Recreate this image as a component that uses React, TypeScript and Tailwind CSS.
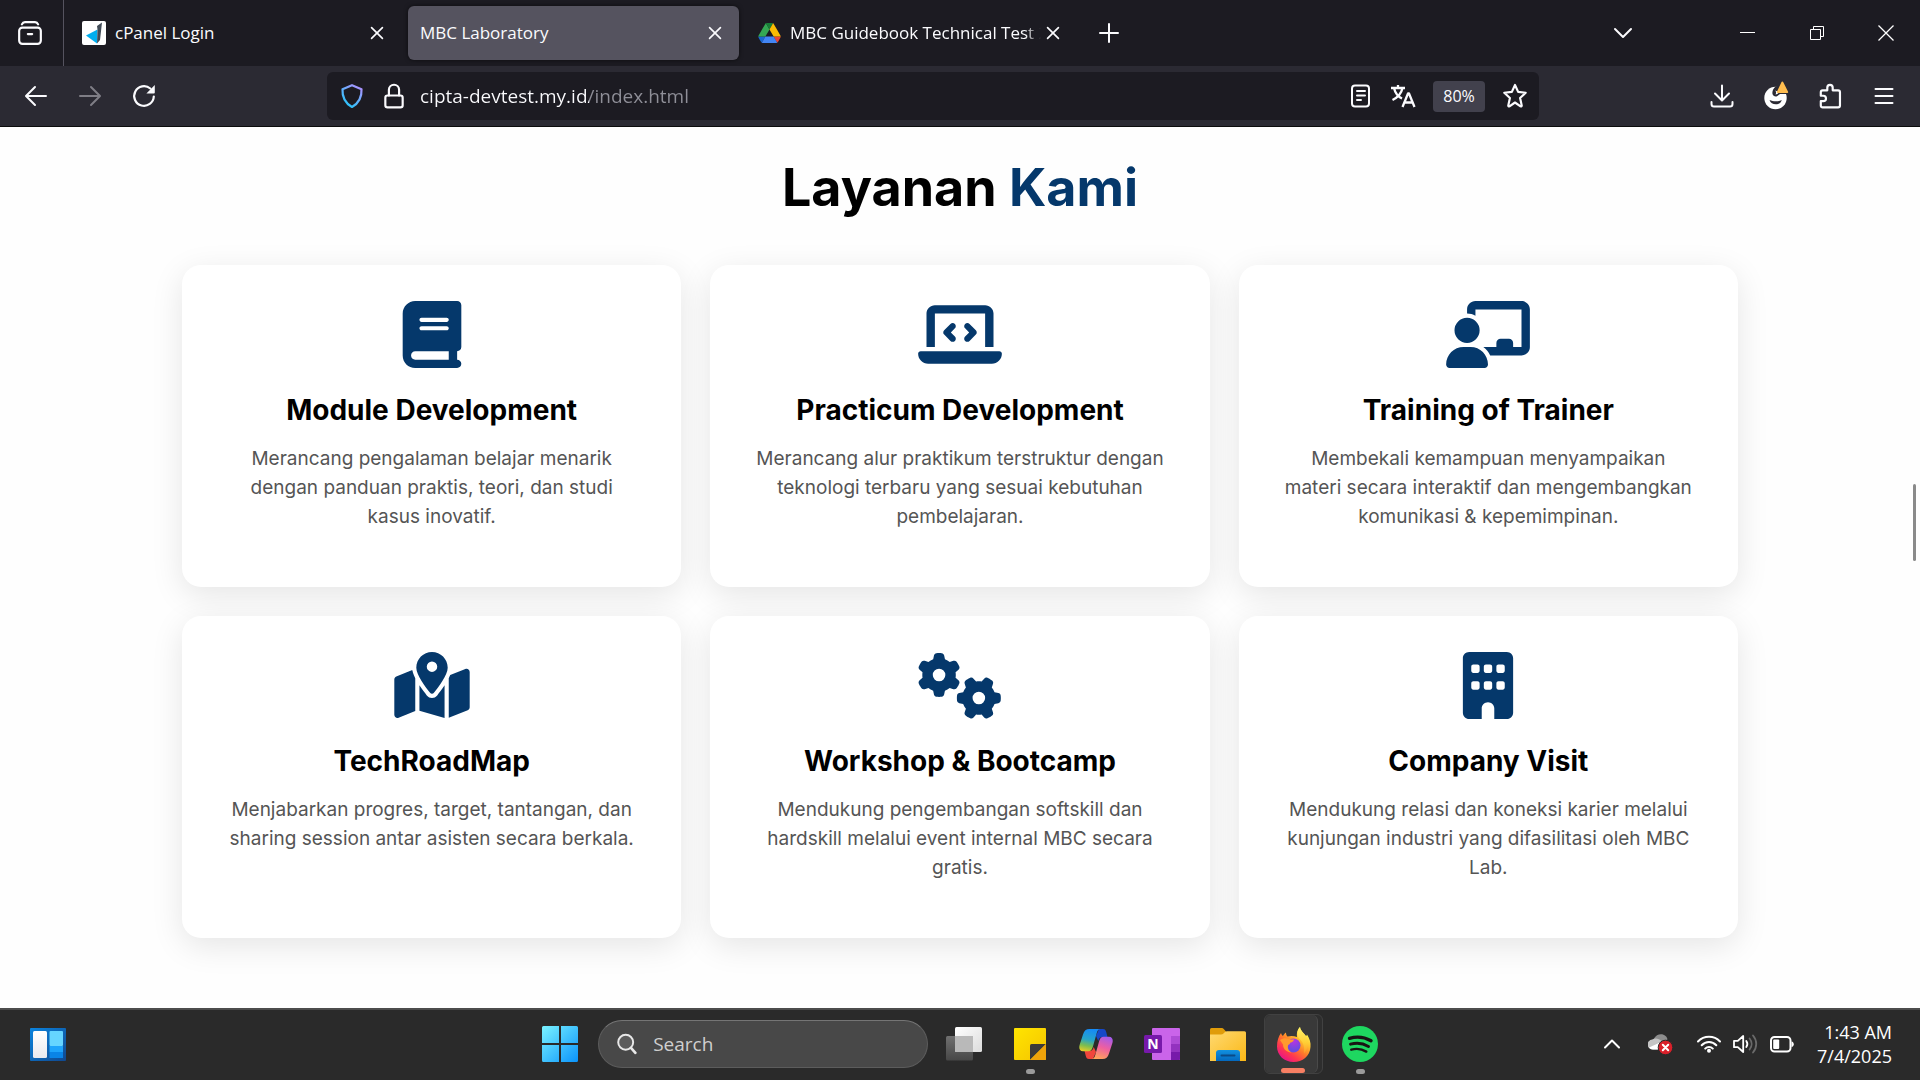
import type { ReactNode } from "react";
import type { IconType } from "react-icons";
import {
  FaBook,
  FaBuilding,
  FaChalkboardUser,
  FaGears,
  FaLaptopCode,
  FaMapLocationDot,
} from "react-icons/fa6";

type Service = { icon: IconType; title: string; text: string };

const services: Service[] = [
  {
    icon: FaBook,
    title: "Module Development",
    text: "Merancang pengalaman belajar menarik dengan panduan praktis, teori, dan studi kasus inovatif.",
  },
  {
    icon: FaLaptopCode,
    title: "Practicum Development",
    text: "Merancang alur praktikum terstruktur dengan teknologi terbaru yang sesuai kebutuhan pembelajaran.",
  },
  {
    icon: FaChalkboardUser,
    title: "Training of Trainer",
    text: "Membekali kemampuan menyampaikan materi secara interaktif dan mengembangkan komunikasi & kepemimpinan.",
  },
  {
    icon: FaMapLocationDot,
    title: "TechRoadMap",
    text: "Menjabarkan progres, target, tantangan, dan sharing session antar asisten secara berkala.",
  },
  {
    icon: FaGears,
    title: "Workshop & Bootcamp",
    text: "Mendukung pengembangan softskill dan hardskill melalui event internal MBC secara gratis.",
  },
  {
    icon: FaBuilding,
    title: "Company Visit",
    text: "Mendukung relasi dan koneksi karier melalui kunjungan industri yang difasilitasi oleh MBC Lab.",
  },
];

function Line({ size = 24, width = 2, children }: { size?: number; width?: number; children: ReactNode }) {
  return (
    <svg
      width={size}
      height={size}
      viewBox="0 0 24 24"
      fill="none"
      stroke="currentColor"
      strokeWidth={width}
      strokeLinecap="round"
      strokeLinejoin="round"
      aria-hidden="true"
    >
      {children}
    </svg>
  );
}

/* ---------- Browser tabs ---------- */

function CpanelIcon() {
  return (
    <svg width="24" height="24" viewBox="0 0 24 24" aria-hidden="true" className="shrink-0">
      <rect width="24" height="24" rx="2" fill="#fff" />
      <path d="M4 14.500L15.500 8.500L15 22.500Z" fill="#00aeef" />
      <path d="M15 5L20 1.500L18 19L15 22.500L15.500 8.500Z" fill="#414b57" />
    </svg>
  );
}

function DriveIcon() {
  return (
    <svg width="23" height="20" viewBox="0 0 87.3 78" aria-hidden="true" className="shrink-0">
      <path d="m6.600 66.850 3.850 6.650c.8 1.400 1.950 2.500 3.300 3.300l13.750-23.800h-27.500c0 1.550.4 3.100 1.200 4.500z" fill="#1967d2" />
      <path d="m43.650 25-13.750-23.800c-1.350.8-2.500 1.900-3.300 3.300l-25.400 44a9.060 9.060 0 0 0 -1.200 4.500h27.500z" fill="#34a853" />
      <path d="m73.550 76.800c1.350-.8 2.500-1.900 3.300-3.300l1.600-2.750 7.650-13.250c.8-1.400 1.200-2.950 1.200-4.500h-27.500l5.850 11.500z" fill="#ea4335" />
      <path d="m43.650 25 13.750-23.800c-1.350-.8-2.900-1.200-4.500-1.200h-18.500c-1.600 0-3.150.45-4.500 1.200z" fill="#188038" />
      <path d="m59.800 53h-32.300l-13.750 23.800c1.350.8 2.900 1.200 4.500 1.200h50.800c1.600 0 3.150-.45 4.500-1.200z" fill="#4285f4" />
      <path d="m73.400 26.500-12.700-22c-.8-1.400-1.950-2.500-3.300-3.300l-13.750 23.800 16.150 28h27.450c0-1.550-.4-3.100-1.200-4.500z" fill="#fbbc04" />
    </svg>
  );
}

function Tab({ title, icon, active = false, fade = false }: { title: string; icon?: ReactNode; active?: boolean; fade?: boolean }) {
  return (
    <div
      className={
        "flex h-[54px] w-[331px] items-center rounded-md px-3 " +
        (active ? "bg-[#55535f] shadow-[0_0_4px_rgba(0,0,0,0.6)]" : "")
      }
    >
      <button type="button" role="tab" aria-selected={active} className="flex min-w-0 flex-1 items-center gap-[9px] text-left">
        {icon}
        <span
          className={
            "min-w-0 flex-1 overflow-hidden whitespace-nowrap text-[17px] leading-6 " +
            (fade ? "[mask-image:linear-gradient(to_left,transparent,black_16px)]" : "")
          }
        >
          {title}
        </span>
      </button>
      <button type="button" aria-label={"Close " + title} className="-ml-1 flex h-6 w-7 shrink-0 items-center justify-end pr-[2px]">
        <Line size={20}>
          <path d="M5.500 5.500l13 13M18.500 5.500l-13 13" />
        </Line>
      </button>
    </div>
  );
}

function TabStrip() {
  return (
    <div className="flex h-[66px] items-center bg-[#1c1b22]">
      <button type="button" aria-label="Firefox View" className="flex h-full w-16 items-center justify-center border-r border-[#55535f] pr-1">
        <Line size={26} width={2}>
          <rect x="2" y="7" width="20" height="15" rx="3" />
          <path d="M4.500 4c.6-1.300 1.500-2 2.800-2h9.400c1.300 0 2.200.7 2.800 2M10 13h4" />
        </Line>
      </button>
      <div role="tablist" className="ml-[6px] flex items-center gap-[7px]">
        <Tab title="cPanel Login" icon={<CpanelIcon />} />
        <Tab title="MBC Laboratory" active />
        <Tab title="MBC Guidebook Technical Test 2025" icon={<DriveIcon />} fade />
      </div>
      <button type="button" aria-label="New tab" className="ml-2 flex size-12 items-center justify-center">
        <Line width={2}>
          <path d="M12 3v18M3 12h18" />
        </Line>
      </button>
      <button type="button" aria-label="List all tabs" className="mr-[66px] ml-auto flex size-12 items-center justify-center">
        <Line width={2}>
          <path d="M4 8l8 8 8-8" />
        </Line>
      </button>
      <button type="button" aria-label="Minimize" className="flex h-full w-[69px] items-center justify-center">
        <svg width="16" height="16" stroke="#fff" aria-hidden="true">
          <path d="M0 7.500h15" />
        </svg>
      </button>
      <button type="button" aria-label="Restore" className="flex h-full w-[69px] items-center justify-center">
        <svg width="16" height="16" stroke="#fff" fill="none" aria-hidden="true">
          <path d="M1.500 4.500h10v10h-10zM4.500 4.500v-3h10v10h-3" />
        </svg>
      </button>
      <button type="button" aria-label="Close window" className="flex h-full w-[69px] items-center justify-center">
        <svg width="16" height="16" stroke="#fff" aria-hidden="true">
          <path d="M.5.5l15 15M15.500.5l-15 15" strokeWidth="1.300" />
        </svg>
      </button>
    </div>
  );
}

/* ---------- Browser toolbar ---------- */

function ToolButton({ label, children, dim = false }: { label: string; children: ReactNode; dim?: boolean }) {
  return (
    <button type="button" aria-label={label} disabled={dim} className={"flex h-12 w-[54px] items-center justify-center " + (dim ? "text-[#7f7e86]" : "")}>
      {children}
    </button>
  );
}

function FieldButton({ label, children }: { label: string; children: ReactNode }) {
  return (
    <button type="button" aria-label={label} className="flex h-12 w-[42px] shrink-0 items-center justify-center">
      {children}
    </button>
  );
}

function AddressBar() {
  return (
    <div className="mx-[156px] flex h-12 min-w-0 flex-1 items-center rounded-md bg-[#1c1b22] pr-[3px] pl-1">
      <FieldButton label="Tracking protection">
        <svg width="24" height="26" viewBox="0 0 24 26" fill="none" aria-hidden="true">
          <defs>
            <linearGradient id="shield" x1="4" y1="24" x2="20" y2="3" gradientUnits="userSpaceOnUse">
              <stop stopColor="#1cc8f8" />
              <stop offset=".5" stopColor="#5fb0fc" />
              <stop offset="1" stopColor="#b190ff" />
            </linearGradient>
          </defs>
          <path d="M12 2.200L21.500 6.200c.5 8.500-3 14-9.500 17.800C5.500 20.200 2 14.700 2.500 6.200Z" stroke="url(#shield)" strokeWidth="2.200" strokeLinejoin="round" />
        </svg>
      </FieldButton>
      <FieldButton label="Site information">
        <Line size={26}>
          <rect x="4" y="11.500" width="16" height="11" rx="2" />
          <path d="M7.300 11.500V6.300a4.700 4.700 0 0 1 9.400 0v5.200" />
        </Line>
      </FieldButton>
      <input
        type="text"
        aria-label="Address"
        defaultValue="cipta-devtest.my.id/index.html"
        className="min-w-0 flex-1 bg-[linear-gradient(to_right,#fbfbfe_174px,#8f8f98_174px)] bg-clip-text pl-[5px] text-[19px] leading-8 text-transparent outline-none"
      />
      <FieldButton label="Reader view">
        <Line size={24}>
          <rect x="3" y="1.500" width="17" height="21" rx="3" />
          <path d="M8 7h8M8 11.500h8M8 16h4" />
        </Line>
      </FieldButton>
      <FieldButton label="Translate page">
        <svg width="26" height="26" viewBox="0 0 26 26" fill="none" stroke="currentColor" strokeWidth="2.300" strokeLinejoin="round" aria-hidden="true">
          <path d="M1 5h14M8 2v3M12.500 5C11.500 10 7.500 14.500 2.500 17M4 5c1 4.500 4 8.500 8 10.500" />
          <path d="M12.500 24l5.500-13.500h1L24.500 24M14.500 19.500h8" />
        </svg>
      </FieldButton>
      <button type="button" aria-label="Reset zoom level, 80%" className="mx-[9px] h-[31px] w-[52px] shrink-0 rounded bg-[#42414d] text-[16px] leading-6">
        80%
      </button>
      <FieldButton label="Bookmark this page">
        <Line size={26}>
          <path d="M12 1.800l2.900 6.400 7 .8-5.200 4.800 1.500 7c.1.700-.5 1.100-1.100.8L12 18l-5.100 3.600c-.6.300-1.200-.1-1.100-.8l1.500-7L2.100 9l7-.8Z" />
        </Line>
      </FieldButton>
    </div>
  );
}

function Toolbar() {
  return (
    <div className="flex h-[61px] items-center border-b border-[#0c0c0d] bg-[#2b2a33] px-[9px]">
      <ToolButton label="Back">
        <Line>
          <path d="M22 12H2.500M11 3l-9 9 9 9" />
        </Line>
      </ToolButton>
      <ToolButton label="Forward" dim>
        <Line>
          <path d="M2 12h19.500M13 3l9 9-9 9" />
        </Line>
      </ToolButton>
      <ToolButton label="Reload">
        <svg width="26" height="26" viewBox="0 0 26 26" fill="none" aria-hidden="true">
          <path d="M22.800 13.500a9.800 9.800 0 1 1-3.500-8" stroke="currentColor" strokeWidth="2.200" strokeLinecap="round" />
          <path d="M23.800 2v7.500a.9.900 0 0 1-.9.900h-7.500Z" fill="currentColor" />
        </svg>
      </ToolButton>
      <AddressBar />
      <ToolButton label="Downloads">
        <Line>
          <path d="M12 1.500v14.500M5 9.500l7 7 7-7M1.500 18v2c0 1.500 1 2.500 2.500 2.500h16c1.500 0 2.500-1 2.500-2.500v-2" />
        </Line>
      </ToolButton>
      <ToolButton label="Account, sign-in needed">
        <svg width="26" height="30" viewBox="0 0 26 30" aria-hidden="true">
          <circle cx="12.500" cy="17" r="11.200" fill="#fff" />
          <path d="M12.500 5.500c-2.500 2.500-3.500 5-3 7.500.5 2 2.500 3 4.500 2.300L17 13h8V4Z" fill="#2b2a33" />
          <path d="M12 9.500c1.200.5 1.500 2.500.5 4 1.500-.2 3-1.200 3.500-2.500Z" fill="#fff" />
          <path d="M6.500 19c2 .9 4 1.300 6.300 1.300s4.200-.4 6-1.300c-1 3-3 4.300-6 4.300s-5.300-1.300-6.300-4.300Z" fill="#2b2a33" />
          <path d="M18.400 1.200a1 1 0 0 1 1.900 0l4.800 9.600c.3.700 0 1.200-.7 1.200H14.600c-.7 0-1-.5-.7-1.200Z" fill="#ffbd4f" />
        </svg>
      </ToolButton>
      <ToolButton label="Extensions">
        <Line size={26} width={2}>
          <path d="M3.500 8.500c0-1 .7-1.700 1.700-1.700h4.300V4.300a2.500 2.500 0 0 1 5 0v2.500h5c1 0 1.700.7 1.700 1.700v12.300c0 1-.7 1.700-1.700 1.700H5.200c-1 0-1.700-.7-1.700-1.700v-4h2.300a2.500 2.500 0 0 0 0-5H3.500Z" />
        </Line>
      </ToolButton>
      <ToolButton label="Application menu">
        <Line size={24}>
          <path d="M3.500 5h17M3.500 12h17M3.500 19h17" />
        </Line>
      </ToolButton>
    </div>
  );
}

/* ---------- Page content ---------- */

function ServiceCard({ icon: Icon, title, text }: Service) {
  return (
    <article className="flex flex-col items-center rounded-[19px] bg-white px-[43px] pt-9 pb-14 text-center shadow-[0_8px_32px_rgba(0,0,0,0.1)]">
      <Icon className="h-[67px] w-[84px] text-[#05386b]" aria-hidden="true" />
      <h3 className="mt-[25px] text-[28px] leading-[34px] font-bold text-black">{title}</h3>
      <p className="mt-[17px] text-[19px] leading-[29px] text-[#555]">{text}</p>
    </article>
  );
}

function Page() {
  return (
    <main className="relative flex-1 bg-[#fefefe] px-12 pt-6 pb-[70px] font-[Inter,sans-serif]">
      <h2 className="text-center text-[52px] leading-[74px] font-bold text-black">
        Layanan <span className="text-[#05386b]">Kami</span>
      </h2>
      <section className="mx-auto mt-10 grid max-w-[1556px] grid-cols-3 gap-[29px]">
        {services.map((s) => (
          <ServiceCard key={s.title} {...s} />
        ))}
      </section>
      <div className="absolute top-[357px] right-1 h-[77px] w-[3px] rounded-full bg-[#8a8a8a]" />
    </main>
  );
}

/* ---------- Taskbar ---------- */

function WidgetsIcon() {
  return (
    <svg width="36" height="33" viewBox="0 0 36 33" aria-hidden="true">
      <defs>
        <linearGradient id="wg" x1="0" y1="0" x2="1" y2="1">
          <stop stopColor="#0b84de" />
          <stop offset="1" stopColor="#10488f" />
        </linearGradient>
        <linearGradient id="wp" x1="0" y1="0" x2="0" y2="1">
          <stop stopColor="#fff" />
          <stop offset="1" stopColor="#e9e9ee" />
        </linearGradient>
      </defs>
      <rect width="36" height="33" rx="1" fill="url(#wg)" />
      <rect x="3" y="3" width="14" height="27" rx="1.500" fill="url(#wp)" />
      <rect x="19.500" y="3" width="13.500" height="15" rx="1" fill="#66d5ff" />
      <rect x="19.500" y="18" width="13.500" height="6" fill="#1ea4fb" />
      <rect x="19.500" y="24" width="13.500" height="6" fill="#0a84e6" />
    </svg>
  );
}

function StartIcon() {
  return (
    <svg width="36" height="36" viewBox="0 0 36 36" aria-hidden="true">
      <defs>
        <linearGradient id="win" x1="0" y1="0" x2="36" y2="36" gradientUnits="userSpaceOnUse">
          <stop stopColor="#7af3ff" />
          <stop offset="1" stopColor="#0a93fb" />
        </linearGradient>
      </defs>
      <path d="M1.500 0H17v17H0V1.500A1.500 1.500 0 0 1 1.500 0ZM19 0h15.500A1.500 1.500 0 0 1 36 1.500V17H19ZM0 19h17v17H1.500A1.500 1.500 0 0 1 0 34.500ZM19 19h17v15.500a1.500 1.500 0 0 1-1.500 1.500H19Z" fill="url(#win)" />
    </svg>
  );
}

function TaskViewIcon() {
  return (
    <svg width="36" height="34" viewBox="0 0 36 34" aria-hidden="true">
      <defs>
        <linearGradient id="tvb" x1="0" y1="0" x2="0" y2="1">
          <stop stopColor="#707070" />
          <stop offset="1" stopColor="#474747" />
        </linearGradient>
        <linearGradient id="tvf" x1="0" y1="0" x2="1" y2="1">
          <stop stopColor="#fff" />
          <stop offset="1" stopColor="#dcdcdc" />
        </linearGradient>
      </defs>
      <rect x="0" y="9" width="27" height="24.500" rx="1.500" fill="url(#tvb)" />
      <rect x="9" y="0" width="27" height="25" rx="1.500" fill="url(#tvf)" />
      <path d="M9 9h18v16H10.500A1.500 1.500 0 0 1 9 23.500Z" fill="#b9b9b9" />
    </svg>
  );
}

function StickyNotesIcon() {
  return (
    <svg width="32" height="32" viewBox="0 0 32 32" aria-hidden="true">
      <defs>
        <linearGradient id="sn" x1="0" y1="0" x2="1" y2="1">
          <stop stopColor="#ffe500" />
          <stop offset="1" stopColor="#f5c400" />
        </linearGradient>
      </defs>
      <rect width="32" height="32" rx="1" fill="url(#sn)" />
      <path d="M16 32V17.500A1.500 1.500 0 0 1 17.500 16H32Z" fill="#3d3a38" />
      <path d="M16 32L32 16V31a1 1 0 0 1-1 1Z" fill="#efa30a" />
    </svg>
  );
}

function CopilotIcon() {
  return (
    <svg width="34" height="32" viewBox="0 0 34 32" aria-hidden="true">
      <defs>
        <linearGradient id="cp1" x1="10" y1="1" x2="5" y2="24" gradientUnits="userSpaceOnUse">
          <stop stopColor="#168bf5" />
          <stop offset=".45" stopColor="#27a5c8" />
          <stop offset=".72" stopColor="#7dbd4f" />
          <stop offset="1" stopColor="#f5d021" />
        </linearGradient>
        <linearGradient id="cp2" x1="28" y1="8" x2="20" y2="31" gradientUnits="userSpaceOnUse">
          <stop stopColor="#a05bf0" />
          <stop offset=".5" stopColor="#ee5fa0" />
          <stop offset="1" stopColor="#ffa25a" />
        </linearGradient>
      </defs>
      <path d="M20 1h4c2 0 2.700 1 3.200 3l1.300 5h-5c-2.500 0-3.500 1.500-4.200 4L17 8Z" fill="#1748c8" />
      <path d="M14 31h-4c-2 0-2.700-1-3.200-3l-1.300-5h5c2.500 0 3.500-1.500 4.200-4L17 24Z" fill="#f0463c" />
      <path d="M10.500 1H21c-2 .5-2.700 2-3.400 4.500L13.800 19c-.8 2.800-2 4.300-4.500 4.300H4c-3.500 0-4.300-3-3.400-6.300L4 6.500C5.200 2.800 7 1 10.500 1Z" fill="url(#cp1)" />
      <path d="M23.500 31H13c2-.5 2.700-2 3.400-4.500L20.200 13c.8-2.800 2-4.300 4.500-4.300H30c3.500 0 4.300 3 3.400 6.300L30 25.500C28.800 29.200 27 31 23.500 31Z" fill="url(#cp2)" />
    </svg>
  );
}

function OneNoteIcon() {
  return (
    <svg width="36" height="32" viewBox="0 0 36 32" aria-hidden="true">
      <rect x="8" width="28" height="32" rx="1" fill="#ca64ea" />
      <rect x="27" y="8" width="9" height="8" fill="#ae4bd5" />
      <rect x="27" y="16" width="9" height="8" fill="#9332bf" />
      <path d="M27 24h9v7a1 1 0 0 1-1 1h-8Z" fill="#7719aa" />
      <rect x="0" y="7" width="18" height="18" rx="1.500" fill="#7719aa" />
      <text x="9" y="21" textAnchor="middle" fontFamily="Open Sans, sans-serif" fontWeight="700" fontSize="14" fill="#fff">
        N
      </text>
    </svg>
  );
}

function ExplorerIcon() {
  return (
    <svg width="36" height="33" viewBox="0 0 36 33" aria-hidden="true">
      <defs>
        <linearGradient id="fe" x1="0" y1="0" x2="1" y2="1">
          <stop stopColor="#ffd971" />
          <stop offset="1" stopColor="#fbb816" />
        </linearGradient>
        <linearGradient id="fb" x1="0" y1="0" x2="0" y2="1">
          <stop stopColor="#1191e0" />
          <stop offset="1" stopColor="#0468bd" />
        </linearGradient>
      </defs>
      <path d="M0 1.500A1.500 1.500 0 0 1 1.500 0h10c1 0 1.500.3 2.200 1L16 3.500V8H0Z" fill="#e09c0a" />
      <path d="M0 6.500h11c1 0 1.800-.3 2.500-1L15 4c.6-.6 1.200-.8 2-.8h17.500A1.500 1.500 0 0 1 36 4.700V33H0Z" fill="url(#fe)" />
      <path d="M6 33V25a3 3 0 0 1 3-3h18a3 3 0 0 1 3 3v8Z" fill="url(#fb)" />
      <path d="M11.500 27.500h13" stroke="#0b4a86" strokeWidth="2" strokeLinecap="round" />
    </svg>
  );
}

function FirefoxIcon() {
  return (
    <svg width="35" height="35" viewBox="0 0 35 35" aria-hidden="true">
      <defs>
        <linearGradient id="ff1" x1="28" y1="4" x2="6" y2="32" gradientUnits="userSpaceOnUse">
          <stop stopColor="#fff44f" />
          <stop offset=".25" stopColor="#ffc02e" />
          <stop offset=".5" stopColor="#ff7a2a" />
          <stop offset=".75" stopColor="#ff3750" />
          <stop offset="1" stopColor="#e8128a" />
        </linearGradient>
        <linearGradient id="ff2" x1="26" y1="0" x2="26" y2="26" gradientUnits="userSpaceOnUse">
          <stop stopColor="#fff36b" />
          <stop offset=".6" stopColor="#ffcf35" />
          <stop offset="1" stopColor="#ff9a2b" />
        </linearGradient>
        <radialGradient id="ff3" cx="18" cy="14" r="9" gradientUnits="userSpaceOnUse">
          <stop stopColor="#b833e1" />
          <stop offset="1" stopColor="#6a4be0" />
        </radialGradient>
      </defs>
      <path d="M5 6c.5 1.500 1.200 2.500 2 3 .5-1.300 1.500-2.500 3-3.500 0 1.700.5 3 1.500 4 3-1 6.500-.7 9.500.5C20.500 6.500 21 3 24 0c.5 4 4 6 6 9 .5-.3.800-.8 1-1.500 2.500 4 4 8 3.500 12.500C34 29 26.500 35 17.500 35S1 28.500 1 19.500C1 14 2.500 9.500 5 6Z" fill="url(#ff1)" />
      <path d="M24 0c.5 4 4 6 6 9.500 3 5.500 2.500 12-2 17 .8-6-.5-11.500-4.500-14.500C20.500 9 21 3 24 0Z" fill="url(#ff2)" />
      <circle cx="17.500" cy="18.500" r="7" fill="url(#ff3)" />
      <path d="M4 13c3-2 6-2.200 8.500-1 1.500.7 3.500.5 5.500.2-.3 2-1.500 3-3.500 3.300-.5 1-1 2-2.300 2.500-1 3 .3 6 3.300 7.500-5-.2-8.500-3.500-8.500-8Z" fill="#ff9a2e" />
    </svg>
  );
}

function SpotifyIcon() {
  return (
    <svg width="36" height="36" viewBox="0 0 36 36" fill="none" stroke="#191414" strokeLinecap="round" aria-hidden="true">
      <circle cx="18" cy="18" r="18" fill="#1ed760" stroke="none" />
      <path d="M7.500 12.300c7-2 15-1.300 21.500 2.400" strokeWidth="3.400" />
      <path d="M8.500 18.200c6-1.700 12.500-1 18 2.200" strokeWidth="2.900" />
      <path d="M9.300 23.700c5-1.400 10.500-.8 15 1.900" strokeWidth="2.400" />
    </svg>
  );
}

function TaskButton({ label, children, running = false }: { label: string; children: ReactNode; running?: boolean }) {
  return (
    <button type="button" aria-label={label} className="relative flex h-[60px] w-[66px] shrink-0 items-center justify-center">
      {children}
      {running && <span className="absolute bottom-0 h-[5px] w-[9px] rounded-full bg-[#9a9a9a]" />}
    </button>
  );
}

function Tray() {
  return (
    <div className="flex items-center justify-self-end pr-7 text-white">
      <button type="button" aria-label="Show hidden icons" className="mr-3 flex h-12 w-12 items-center justify-center">
        <svg width="18" height="12" fill="none" stroke="currentColor" strokeWidth="2" strokeLinecap="round" strokeLinejoin="round" aria-hidden="true">
          <path d="M2 9.500l7-7 7 7" />
        </svg>
      </button>
      <button type="button" aria-label="OneDrive, sync problem" className="mr-6 flex h-12 items-center">
        <svg width="25" height="22" viewBox="0 0 25 22" aria-hidden="true">
          <path d="M6 5.500C8 2 12 .5 15.500 1.800c2 .8 3.500 2.400 4 4.500L16 10 6.500 8Z" fill="#8d8d8d" />
          <path d="M5 16.500a5 5 0 0 1-.8-10c3-2 7-1 9.300 1.500l-4 8.500Z" fill="#c4c4c4" />
          <path d="M1 14.500L11 10l3 6.500H5c-1.700 0-3.200-.8-4-2Z" fill="#fff" />
          <circle cx="17.500" cy="14.500" r="7.300" fill="#d9202a" stroke="#2a2a2a" />
          <path d="M14.800 11.800l5.400 5.400M20.200 11.800l-5.400 5.400" stroke="#fff" strokeWidth="2" strokeLinecap="round" />
        </svg>
      </button>
      <button type="button" aria-label="Network, volume and battery" className="flex h-12 items-center gap-3">
        <svg width="24" height="20" viewBox="0 0 24 20" fill="none" stroke="currentColor" strokeWidth="2" strokeLinecap="round" aria-hidden="true">
          <path d="M1 7.500c6-6.300 16-6.300 22 0M4.700 11.300c4-4.300 10.600-4.300 14.600 0M8.200 14.600c2.100-2.300 5.500-2.300 7.600 0" />
          <circle cx="12" cy="16.800" r="2" fill="currentColor" stroke="none" />
        </svg>
        <svg width="25" height="20" viewBox="0 0 25 20" fill="none" stroke="currentColor" strokeWidth="1.800" strokeLinecap="round" strokeLinejoin="round" aria-hidden="true">
          <path d="M1 6.800h3.800L10.200 2v16l-5.400-4.800H1Z" />
          <path d="M13.300 7c1.300 1.800 1.300 4.200 0 6" />
          <path d="M16.600 4.500c2.700 3.300 2.700 7.700 0 11M20 1.500c4.300 5 4.300 12 0 17" stroke="#6a6a6a" />
        </svg>
        <svg width="24" height="17" viewBox="0 0 24 17" aria-hidden="true">
          <rect x="1" y="1" width="19.500" height="14.500" rx="3.500" fill="none" stroke="currentColor" strokeWidth="2" />
          <rect x="3.200" y="3.500" width="6" height="9.500" rx="1" fill="currentColor" />
          <path d="M21.500 5.500c3 .5 3 5 0 5.500Z" fill="currentColor" />
        </svg>
      </button>
      <button type="button" className="ml-[23px] text-right text-[18px] leading-6 whitespace-nowrap">
        <time className="block">1:43 AM</time>
        <time className="block">7/4/2025</time>
      </button>
    </div>
  );
}

function Taskbar() {
  return (
    <footer className="grid h-[72px] grid-cols-[1fr_auto_1fr] items-center border-t-2 border-[#4c4c4c] bg-[#2a2a2a] pb-[2px]">
      <button type="button" aria-label="Widgets" className="ml-[30px] justify-self-start">
        <WidgetsIcon />
      </button>
      <div className="flex items-center">
        <TaskButton label="Start">
          <StartIcon />
        </TaskButton>
        <label className="mr-[3px] ml-[5px] flex h-12 w-[330px] items-center rounded-full border border-[#5c5c5c] border-t-[#757575] bg-[#484848] pl-[17px]">
          <svg width="24" height="24" viewBox="0 0 24 24" fill="none" stroke="#e8e8e8" strokeWidth="2.200" strokeLinecap="round" aria-hidden="true">
            <circle cx="11" cy="10" r="8.500" fill="#5c5c5c" />
            <path d="M17 16.500l5 5.500" strokeWidth="3" />
          </svg>
          <input
            type="search"
            aria-label="Search"
            placeholder="Search"
            className="ml-4 w-full min-w-0 bg-transparent text-[19px] leading-7 outline-none placeholder:text-[#cfcfcf]"
          />
        </label>
        <TaskButton label="Task view">
          <TaskViewIcon />
        </TaskButton>
        <TaskButton label="Sticky Notes" running>
          <StickyNotesIcon />
        </TaskButton>
        <TaskButton label="Copilot">
          <CopilotIcon />
        </TaskButton>
        <TaskButton label="OneNote">
          <OneNoteIcon />
        </TaskButton>
        <TaskButton label="File Explorer">
          <ExplorerIcon />
        </TaskButton>
        <button type="button" aria-label="Firefox, 2 windows" className="flex h-[60px] w-[66px] shrink-0 items-center rounded-md pl-[3px]">
          <span className="flex h-[60px] w-[59px] rounded-md border border-[#414141] bg-[#2e2e2e]">
            <span className="relative flex h-full w-[53px] items-center justify-center rounded-md border-r border-[#4a4a4a] bg-[#393939] pl-1">
              <FirefoxIcon />
              <span className="absolute bottom-0 h-[5px] w-6 rounded-full bg-[#f77f63]" />
            </span>
          </span>
        </button>
        <TaskButton label="Spotify" running>
          <SpotifyIcon />
        </TaskButton>
      </div>
      <Tray />
    </footer>
  );
}

export default function App() {
  return (
    <div className="flex min-h-screen flex-col bg-[#fefefe] font-['Open_Sans',sans-serif] text-[#fbfbfe]">
      <header>
        <TabStrip />
        <Toolbar />
      </header>
      <Page />
      <Taskbar />
    </div>
  );
}
